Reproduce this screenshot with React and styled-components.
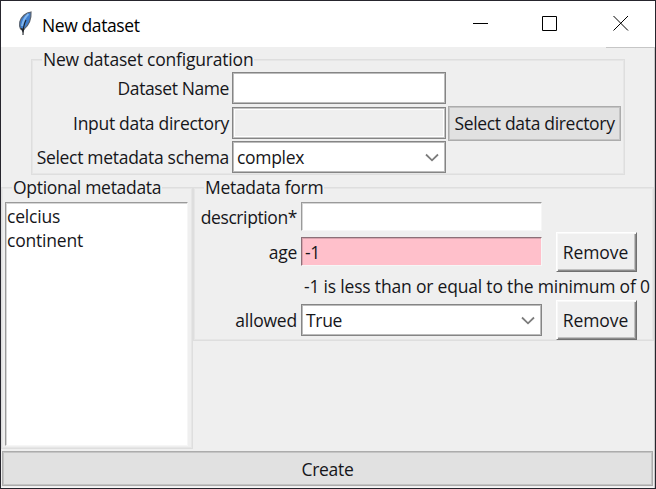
import React from "react";
import styled, { createGlobalStyle } from "styled-components";

const Global = createGlobalStyle`
  * { box-sizing: border-box; }
  body { margin: 0; overflow: hidden; font-family: "Open Sans", "Noto Sans", sans-serif; }
`;

const Window = styled.div`
  width: 656px;
  height: 489px;
  display: flex;
  flex-direction: column;
  background: #efefef;
  border: 1px solid #26252d;
  color: #16161a;
  font-size: 17.5px;
  line-height: 24px;
`;

const Text = styled.span`
  white-space: nowrap;
  letter-spacing: ${(p) => p.$track ?? -0.3}px;
`;

const TitleBar = styled.header`
  height: 46px;
  flex: none;
  display: flex;
  align-items: center;
  background: #fff;
  color: #000;
  padding: 2px 26px 0 17px;
`;

const Title = styled.h1`
  flex: 1;
  margin: 0 0 0 8px;
  font-size: 17.5px;
  font-weight: 400;
`;

const Controls = styled.div`
  display: grid;
  grid-template-columns: 69px 71px 16px;
  margin-top: -4px;
`;

const Control = styled.svg`
  width: 16px;
  height: 16px;
  display: block;
  fill: none;
  stroke: #000;
`;

const Client = styled.main`
  flex: 1;
  display: flex;
  flex-direction: column;
  border-right: 1px solid #c8c8c8;
  background: linear-gradient(#c6c6c6, #c6c6c6) right top / 48px 1px no-repeat;
`;

const Group = styled.section`
  position: relative;
  border: 1px solid #dedede;
  box-shadow: inset 0 0 0 1px #e6e6e6;
  width: ${(p) => p.$w}px;
  height: ${(p) => p.$h}px;
  margin: ${(p) => p.$margin || "0"};
  padding: ${(p) => p.$pad};
`;

const Legend = styled.h2`
  position: absolute;
  top: -13px;
  left: ${(p) => p.$left}px;
  margin: 0;
  padding: 0 1px;
  font-size: inherit;
  font-weight: 400;
  line-height: 24px;
  background: #efefef;
`;

const ConfigRow = styled.div`
  display: grid;
  grid-template-columns: 199px 216px 173px;
  align-items: center;
  height: 34.5px;
`;

const Label = styled.label`
  text-align: right;
  padding-right: 1px;
  white-space: nowrap;
`;

const ConfigLabel = styled(Label)`
  padding-right: 3px;
`;

const Field = styled.div`
  width: ${(p) => (p.$w ? `${p.$w}px` : "auto")};
  height: 32px;
  display: flex;
  align-items: center;
  justify-content: space-between;
  padding: 0 6px 0 4px;
  border: 1px solid #858585;
  box-shadow: inset 0 0 0 1px ${(p) => (p.$readonly ? "#c4c4c4, inset 0 0 0 2px #fff" : "#bcbcbc")};
  background: ${(p) => (p.$readonly ? "#efefef" : "#fff")};
`;

const Sunken = styled.div`
  height: 29px;
  display: flex;
  align-items: center;
  padding: 0 3px;
  border: 1px solid;
  border-color: ${(p) => (p.$invalid ? "#8c7078 #f6f6f6 #f6f6f6 #8c7078" : "#9a9a9a #f6f6f6 #f6f6f6 #9a9a9a")};
  box-shadow: inset 1px 1px 0 ${(p) => (p.$invalid ? "#d9a3ad" : "#d6d6d6")};
  background: ${(p) => (p.$invalid ? "#ffc0cb" : "#fff")};
`;

const FlatButton = styled.button`
  display: block;
  height: 35px;
  width: 100%;
  padding: 0;
  border: 1px solid #acacac;
  box-shadow: inset 0 0 0 1px #c4c4c4;
  background: #e1e1e1;
  color: inherit;
  font: inherit;
`;

const RaisedButton = styled.button`
  width: 81px;
  height: 40px;
  padding: 0 2px 0 0;
  border: 1px solid;
  border-color: #fff #707070 #707070 #fff;
  box-shadow: inset 1px 1px 0 #f8f8f8, inset -1px -1px 0 #8c8c8c, inset -2px -2px 0 #c0c0c0;
  background: #efefef;
  color: inherit;
  font: inherit;
`;

const Columns = styled.div`
  display: flex;
  align-items: flex-start;
`;

const ListBox = styled.ul`
  margin: 0;
  height: 244px;
  padding: 1px 0 0 1px;
  list-style: none;
  background: #fff;
  border: 1px solid;
  border-color: #9a9a9a #f6f6f6 #f6f6f6 #9a9a9a;
  box-shadow: inset 1px 1px 0 #d6d6d6;
`;

const FormGrid = styled.div`
  display: grid;
  grid-template-columns: 102px 241px 82px;
  grid-template-rows: 35px 35px 34px 34px;
  column-gap: 3px;
  align-items: center;
`;

const RemoveCell = styled.div`
  padding-left: 11px;
`;

const Message = styled.p`
  grid-column: 2 / span 2;
  margin: 0;
  padding-left: 3px;
  white-space: nowrap;
`;

const Footer = styled.footer`
  margin-top: auto;
  padding: 0 1px 1px 1px;
  border-bottom: 1px solid #f6f6f6;
`;

const ChevronIcon = styled.svg`
  width: 14px;
  height: 9px;
  fill: none;
  stroke: #7c7c7c;
  stroke-width: 1.8;
`;

const FeatherIcon = styled.svg`
  width: 16px;
  height: 25px;
  margin-top: -4px;
`;

const Chevron = () => (
  <ChevronIcon viewBox="0 0 14 9"><path d="M1 1.5 7 7.3 13 1.5" /></ChevronIcon>
);

const Feather = () => (
  <FeatherIcon viewBox="0 0 16 25">
    <path d="M13 1C8 1.500 3 6 1.800 11c-.6 3-.2 5 .8 7l3 .5C10 15 13.500 9 13 1z" fill="#3f7fd0" stroke="#5b626c" strokeWidth="1.2" />
    <path d="M10.500 3C7 6 5 10 4 15" stroke="#83b7ee" strokeWidth="2" fill="none" />
    <path d="M8 9C6.500 12 5 17 5 24" stroke="#20242a" strokeWidth="1.1" fill="none" />
    <path d="M2.500 17 5 22l1.500-4z" fill="#20242a" />
  </FeatherIcon>
);

const optional = ["celcius", "continent"];

export default function App() {
  return (
    <Window>
      <Global />
      <TitleBar>
        <Feather />
        <Title><Text $track={-0.4}>New dataset</Text></Title>
        <Controls>
          <Control viewBox="0 0 16 16"><path d="M0 8.500H15" /></Control>
          <Control viewBox="0 0 16 16"><path d="M.5 1.500H14.500V15.500H.5Z" /></Control>
          <Control viewBox="0 0 16 16"><path d="M.5 1 15 15.500M15 1 .5 15.500" /></Control>
        </Controls>
      </TitleBar>
      <Client>
        <Group $w={594} $h={116} $margin="12px 0 0 30px" $pad="11px 0 0 1px">
          <Legend $left={10}><Text $track={-0.2}>New dataset configuration</Text></Legend>
          <ConfigRow>
            <ConfigLabel><Text $track={-0.4}>Dataset Name</Text></ConfigLabel>
            <Field $w={214} />
          </ConfigRow>
          <ConfigRow>
            <ConfigLabel><Text>Input data directory</Text></ConfigLabel>
            <Field $readonly $w={214} />
            <FlatButton><Text $track={-0.32}>Select data directory</Text></FlatButton>
          </ConfigRow>
          <ConfigRow>
            <ConfigLabel><Text>Select metadata schema</Text></ConfigLabel>
            <Field $w={214}><Text>complex</Text><Chevron /></Field>
          </ConfigRow>
        </Group>
        <Columns>
          <Group $w={192} $h={262} $margin="12px 0 0 0" $pad="14px 4px 0 3px">
            <Legend $left={10}><Text>Optional metadata</Text></Legend>
            <ListBox>
              {optional.map((name) => <li key={name}><Text $track={-0.2}>{name}</Text></li>)}
            </ListBox>
          </Group>
          <Group $w={461} $h={154} $margin="12px 0 0 0" $pad="11px 0 0 2px">
            <Legend $left={10}><Text>Metadata form</Text></Legend>
            <FormGrid>
              <Label><Text $track={-0.4}>description*</Text></Label>
              <Sunken />
              <span />
              <Label><Text>age</Text></Label>
              <Sunken $invalid><Text>-1</Text></Sunken>
              <RemoveCell><RaisedButton><Text $track={-0.1}>Remove</Text></RaisedButton></RemoveCell>
              <span />
              <Message><Text $track={-0.19}>-1 is less than or equal to the minimum of 0</Text></Message>
              <Label><Text $track={-0.2}>allowed</Text></Label>
              <Field><Text>True</Text><Chevron /></Field>
              <RemoveCell><RaisedButton><Text $track={-0.1}>Remove</Text></RaisedButton></RemoveCell>
            </FormGrid>
          </Group>
        </Columns>
        <Footer>
          <FlatButton><Text $track={-0.3}>Create</Text></FlatButton>
        </Footer>
      </Client>
    </Window>
  );
}
